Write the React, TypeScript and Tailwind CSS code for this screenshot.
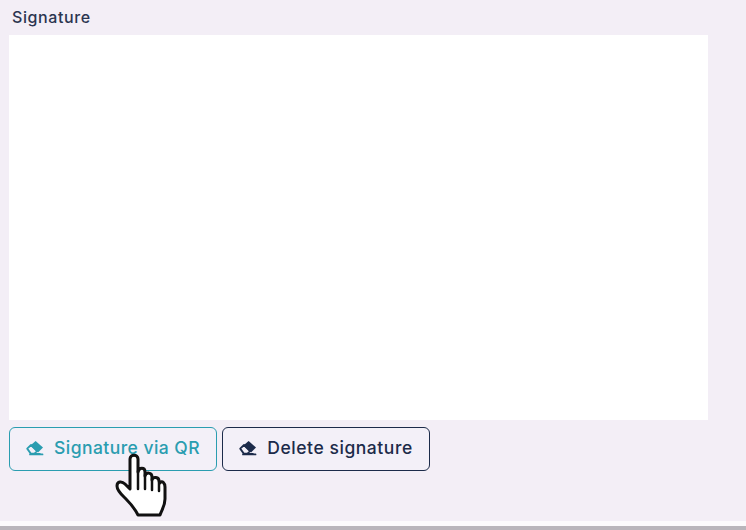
const EraserIcon = () => (
    <svg width="18" height="16" viewBox="0 0 18 16" className="shrink-0">
        <path d="M6.5 14 H14 M16.5 14.4 H4" stroke="currentColor" strokeWidth="1.8" strokeLinecap="round" />
        <path d="M1.2 8.6 L5 5 L11 11 L8.5 13.6 L4.8 13.6 Z" fill="none" stroke="currentColor" strokeWidth="1.8" strokeLinejoin="round" />
        <path d="M9.6 1 L17 7.4 L12 12.4 L4.4 5.6 Z" fill="currentColor" />
    </svg>
);

const HandCursor = () => (
    <svg width="56" height="66" viewBox="0 0 56 66" className="absolute left-[114px] top-[453px]">
        <path
            d="M16 6 C16 1 24 1 24 6 L24 19 C25 14 31 14 31 19 L31 23 C32 19 38 19 38 24 L38 27 C39 23 45 24 45 28 L46 30 C48 27 51 30 51 34 L51 46 C51 53 48 56 46 62 L24 62 C21 56 17 51 12 46 C8 42 3 38 3 33 C3 28 8 28 11 31 L16 36 Z"
            fill="#ffffff"
            stroke="#111111"
            strokeWidth="3"
            strokeLinejoin="round"
        />
        <path d="M24 18 V36 M31 22 V36 M38 26 V37 M45 29 V38" stroke="#111111" strokeWidth="2.5" strokeLinecap="round" fill="none" />
    </svg>
);

const App = () => {
    return (
        <div className="relative h-[530px] w-[746px] overflow-hidden bg-[#f3eef6] font-['Inter',sans-serif]">
            <div className="flex h-[521px] flex-col pl-[9px] pt-[8px]">
                <span className="pl-[3px] text-[16px] leading-[18px] font-medium tracking-[0.6px] text-[#2b3550]">Signature</span>
                <div className="mt-[9px] h-[385px] w-[699px] bg-white"></div>
                <div className="mt-[7px] flex gap-[5px]">
                    <button className="flex h-[44px] w-[208px] items-center justify-center gap-[10px] rounded-[6px] border-[1.5px] border-[#2a9db0] bg-[#f3f0f8] pb-[2px] text-[17.5px] font-medium tracking-[0.45px] text-[#2a9db0]">
                        <EraserIcon />
                        Signature via QR
                    </button>
                    <button className="flex h-[44px] w-[208px] items-center justify-center gap-[10px] rounded-[6px] border-[1.5px] border-[#1c2b4a] bg-[#f3f0f8] pb-[2px] text-[17.5px] font-medium tracking-[0.55px] text-[#1c2b4a]">
                        <EraserIcon />
                        Delete signature
                    </button>
                </div>
            </div>
            <div className="h-[5px] bg-white/70"></div>
            <div className="h-[4px] bg-[#b9b5bb]"></div>
            <HandCursor />
        </div>
    );
};

export default App;
